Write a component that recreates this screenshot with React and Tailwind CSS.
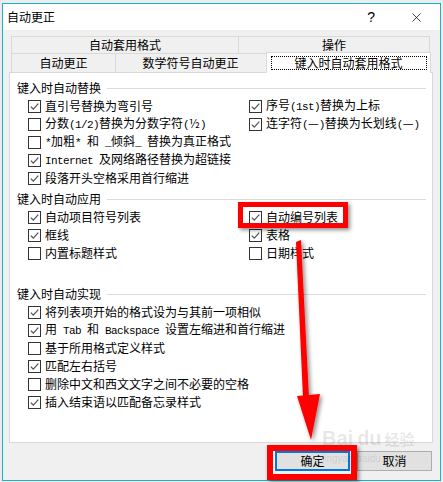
import { X } from 'lucide-react';

const cjk = "font-['Noto_Sans_CJK_SC',sans-serif]";

// ascii runs get a half-width mono face, like SimSun's latin glyphs
function Label({ text }) {
  const parts = text.split(/([\x00-\x7F]+)/);
  return (
    <span className="whitespace-pre">
      {parts.map((p, i) =>
        i % 2 === 1 ? (
          <span key={i} className="font-['Liberation_Mono',monospace] text-[11px] tracking-[-0.6px]">{p}</span>
        ) : (
          <span key={i}>{p}</span>
        )
      )}
    </span>
  );
}

function Check({ on, text }) {
  return (
    <div className="flex items-center h-[18px] gap-[4px]">
      <div className="w-[13px] h-[13px] border border-[#333] bg-white flex items-center justify-center shrink-0">
        {on && (
          <svg width="11" height="11" viewBox="0 0 11 11">
            <path d="M1.8 5.6 L4.3 8.1 L9.3 2.6" fill="none" stroke="#555" strokeWidth="1.3" />
          </svg>
        )}
      </div>
      <Label text={text} />
    </div>
  );
}

function Heading({ children, className = '' }) {
  return (
    <div className={`flex items-center h-[18px] ${className}`}>
      <span className="pr-[6px]">{children}</span>
      <div className="flex-1 h-px bg-[#dcdcdc]" />
    </div>
  );
}

function Group({ title, left, right = [], className }) {
  return (
    <div>
      <Heading className={className}>{title}</Heading>
      <div className="flex pl-[11px]">
        <div className="w-[221px] flex flex-col">
          {left.map(([on, t]) => <Check key={t} on={on} text={t} />)}
        </div>
        <div className="flex flex-col">
          {right.map(([on, t]) => <Check key={t} on={on} text={t} />)}
        </div>
      </div>
    </div>
  );
}

const g1L = [
  [true, '直引号替换为弯引号'],
  [false, '分数(1/2)替换为分数字符(½)'],
  [false, '*加粗* 和 _倾斜_ 替换为真正格式'],
  [true, 'Internet 及网络路径替换为超链接'],
  [true, '段落开头空格采用首行缩进'],
];
const g1R = [
  [true, '序号(1st)替换为上标'],
  [true, '连字符(—)替换为长划线(—)'],
];
const g2L = [
  [true, '自动项目符号列表'],
  [true, '框线'],
  [false, '内置标题样式'],
];
const g2R = [
  [true, '自动编号列表'],
  [true, '表格'],
  [false, '日期样式'],
];
const g3 = [
  [true, '将列表项开始的格式设为与其前一项相似'],
  [true, '用 Tab 和 Backspace 设置左缩进和首行缩进'],
  [false, '基于所用格式定义样式'],
  [true, '匹配左右括号'],
  [false, '删除中文和西文文字之间不必要的空格'],
  [true, '插入结束语以匹配备忘录样式'],
];

export default function App() {
  return (
    <div className={`relative w-[443px] h-[482px] overflow-hidden bg-[#ececec] pt-[3px] pl-[2px] text-[12px] leading-none text-black ${cjk}`}>
      <div className="w-[439px] h-[478px] border border-[#1ab1cf] bg-[#f0f0f0] flex flex-col">
        {/* title bar */}
        <div className="h-[26px] bg-white flex items-center justify-between pl-[4px] pr-[16px] shrink-0">
          <span className="text-[12px]">自动更正</span>
          <div className="flex items-center gap-[34px]">
            <span className="font-['Liberation_Sans',sans-serif] text-[14px]">?</span>
            <X size={15} strokeWidth={1.2} />
          </div>
        </div>

        <div className="flex flex-col pl-[6px] pt-[6px]">
          {/* tabs */}
          <div className="ml-[2px] flex flex-col">
            <div className="flex h-[17px]">
              <div className="w-[228px] border-t border-l border-r border-[#d9d9d9] flex items-center justify-center">自动套用格式</div>
              <div className="w-[192px] -ml-px border-t border-l border-r border-[#d9d9d9] flex items-center justify-center">操作</div>
            </div>
            <div className="flex h-[19px] items-end">
              <div className="w-[105px] h-[19px] border-t border-l border-r border-[#d9d9d9] flex items-center justify-center">自动更正</div>
              <div className="w-[152px] h-[19px] -ml-px border-t border-r border-[#d9d9d9] flex items-center justify-center">数学符号自动更正</div>
              <div className="w-[165px] h-[21px] -ml-px -mb-px relative z-10 bg-white border-t border-l border-r border-[#d9d9d9] flex items-center justify-center">
                <div className="w-[156px] h-[14px] border border-dotted border-black flex items-center justify-center">键入时自动套用格式</div>
              </div>
            </div>
          </div>

          {/* panel */}
          <div className="w-[424px] h-[371px] bg-white border border-[#d9d9d9] pt-[6px] pl-[7px] pr-[6px]">
            <Group title="键入时自动替换" left={g1L} right={g1R} />
            <Group title="键入时自动应用" left={g2L} right={g2R} className="mt-[3px]" />
            <Group title="键入时自动实现" left={g3} className="mt-[23px]" />
          </div>

          {/* buttons */}
          <div className="flex justify-end gap-[7px] pr-[8px] mt-[8px]">
            <button className="w-[75px] h-[20px] bg-[#e1e1e1] border-2 border-[#0078d7] flex items-center justify-center">确定</button>
            <button className="w-[75px] h-[20px] bg-[#e1e1e1] border border-[#adadad] flex items-center justify-center">取消</button>
          </div>
        </div>
      </div>

      {/* watermark */}
      <div className="absolute left-[322px] top-[428px] pointer-events-none text-black/10 font-['Liberation_Sans',sans-serif]">
        <div className="text-[20px] font-bold leading-none">Bai<span className="ml-[4px]">du</span><span className={`text-[15px] ml-[3px] ${cjk}`}>经验</span></div>
        <div className="text-[10px] mt-[6px]">jingyan.baidu.com</div>
      </div>

      {/* red annotations */}
      <div className="absolute left-[238px] top-[202px] w-[110px] h-[26px] border-[5px] border-[#ff0000] shadow-[2px_2px_4px_rgba(0,0,0,0.45)] pointer-events-none" />
      <div className="absolute left-[267px] top-[445px] w-[90px] h-[35px] border-[6px] border-[#ff0000] shadow-[2px_2px_4px_rgba(0,0,0,0.45)] pointer-events-none" />
      <svg className="absolute inset-0 pointer-events-none" width="443" height="482" viewBox="0 0 443 482">
        <defs>
          <filter id="sh" x="-50%" y="-10%" width="200%" height="120%">
            <feDropShadow dx="2" dy="2" stdDeviation="2" floodColor="#000" floodOpacity="0.45" />
          </filter>
        </defs>
        <g filter="url(#sh)" fill="#ff0000">
          <polygon points="296,242 301,240 309,398 303,398" />
          <polygon points="297,396 320,394 311,440" />
        </g>
      </svg>
    </div>
  );
}
